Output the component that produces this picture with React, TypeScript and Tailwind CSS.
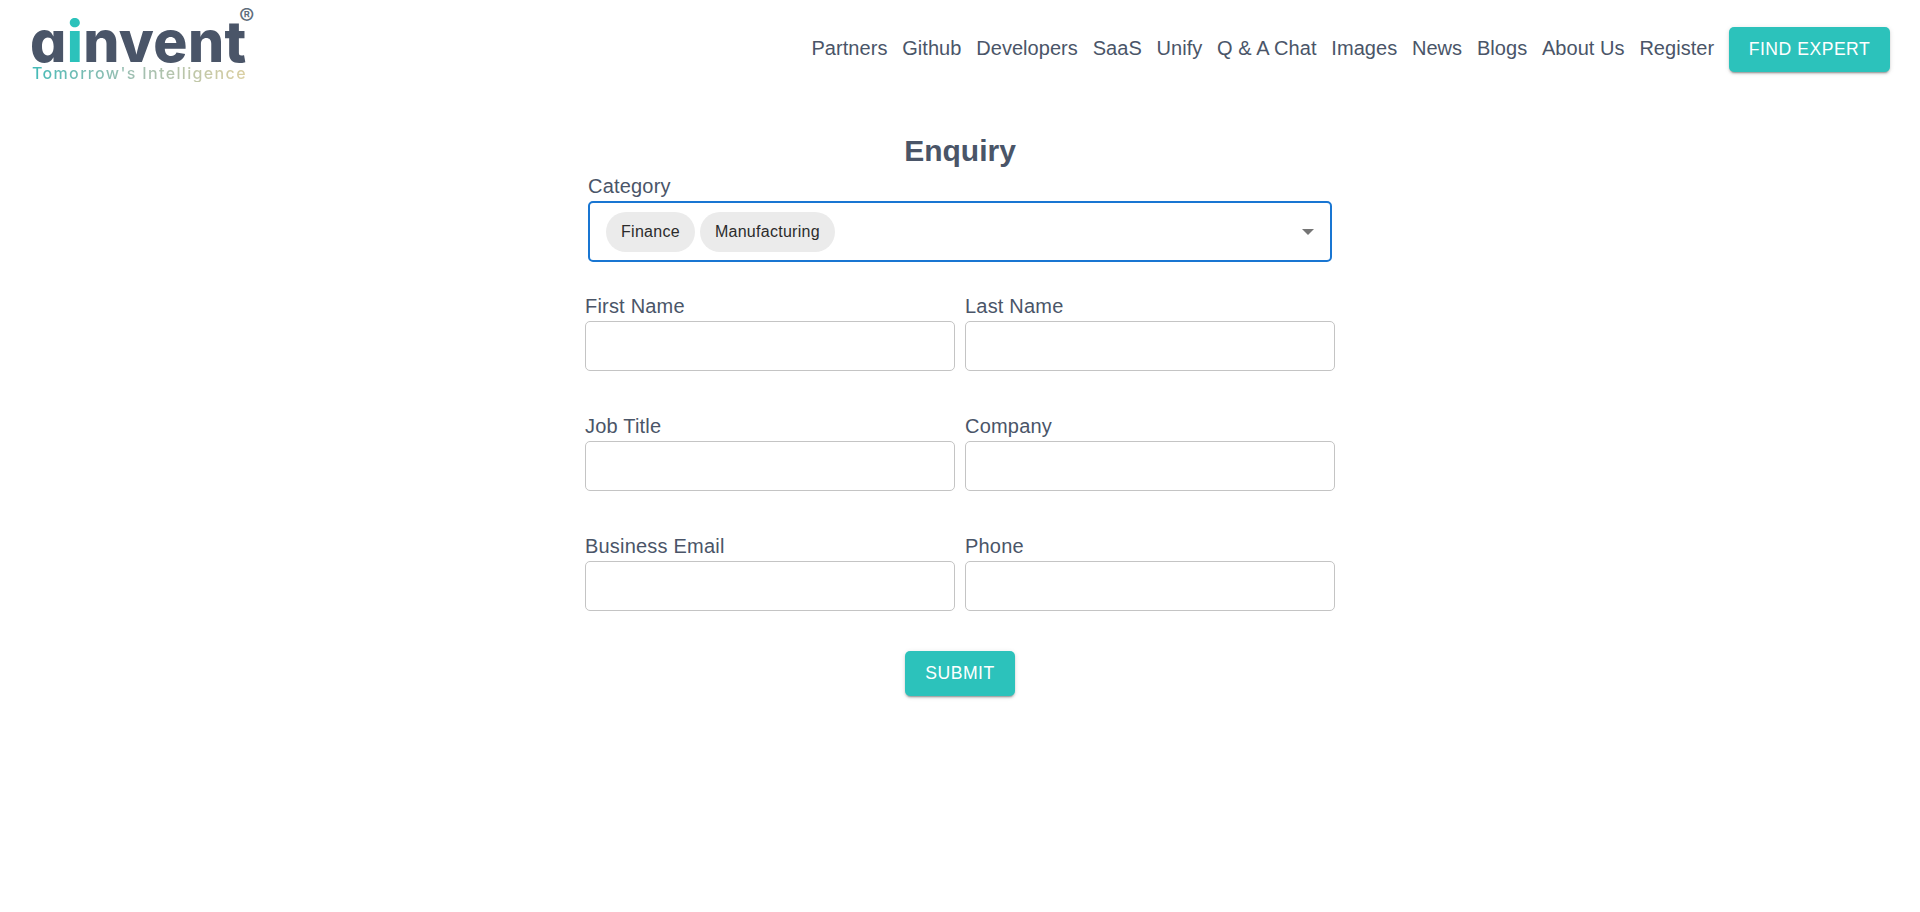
const navLinks = ["Partners", "Github", "Developers", "SaaS", "Unify", "Q & A Chat", "Images", "News", "Blogs", "About Us", "Register"];

const rows = [
    ["First Name", "Last Name"],
    ["Job Title", "Company"],
    ["Business Email", "Phone"],
];

const btnShadow = "shadow-[0_3px_1px_-2px_rgba(0,0,0,0.2),0_2px_2px_0_rgba(0,0,0,0.14),0_1px_5px_0_rgba(0,0,0,0.12)]";

function Logo() {
    return (
        <a href="#" className="relative block w-[226px] h-[68px] ml-[30px] mt-[4px] font-['Inter',sans-serif]">
            <div className="h-[48px] text-[57px] leading-[50px] font-extrabold tracking-[0.4px] text-[#4a5568] [font-feature-settings:'cv11']">
                a<span className="text-[#2cc2bb]">i</span>nvent
            </div>
            <div className="w-[218px] ml-[2px] text-[16px] leading-[17px] font-medium tracking-[1.35px] whitespace-nowrap text-transparent bg-clip-text bg-linear-to-r from-[#3fbab7] via-[#a3bfb0] to-[#dccfa0]">
                Tomorrow's Intelligence
            </div>
            <span className="absolute left-[209px] top-[-10px] text-[23px] leading-[20px] text-[#5f6d7c]">®</span>
        </a>
    );
}

function Field({ label }: { label: string }) {
    return (
        <div className="flex-1">
            <label className="block h-[24px] text-[20px] leading-[24px] tracking-[0.2px] text-[#4a5568] mb-[3px]">{label}</label>
            <input type="text" className="block w-full h-[50px] rounded-[5px] border border-[#c4c4c4] bg-white px-3 outline-none" />
        </div>
    );
}

export default function App() {
    return (
        <div className="min-h-[912px] bg-white font-['Liberation_Sans',Arial,sans-serif]">
            <header className="h-[98px] flex items-center justify-between pr-[30px]">
                <Logo />
                <nav className="flex items-center gap-[14.75px]">
                    {navLinks.map((link) => (
                        <a key={link} href="#" className="pb-[2px] text-[20px] leading-[24px] tracking-[0.05px] text-[#4a5568] whitespace-nowrap">
                            {link}
                        </a>
                    ))}
                    <button className={`w-[161px] h-[45px] rounded-[5px] bg-[#2cc2bb] text-white text-[17.6px] tracking-[0.02857em] ${btnShadow}`}>
                        FIND EXPERT
                    </button>
                </nav>
            </header>

            <main className="w-[750px] mx-auto pt-[35px]">
                <h1 className="h-[41px] text-center text-[30px] leading-[36px] font-bold text-[#4a5568]">Enquiry</h1>

                <div className="px-[3px]">
                    <label className="block h-[24px] text-[20px] leading-[24px] tracking-[0.2px] text-[#4a5568] mb-[3px]">Category</label>
                    <div className="h-[61px] rounded-[5px] border-2 border-[#1976d2] flex items-center justify-between pl-[16px] pr-[16px]">
                        <div className="flex items-center gap-[5px]">
                            <span className="h-[40px] rounded-full bg-[#ebebeb] px-[15px] flex items-center text-[16px] tracking-[0.28px] text-[#2b2b2b]">Finance</span>
                            <span className="h-[40px] rounded-full bg-[#ebebeb] px-[15px] flex items-center text-[16px] tracking-[0.28px] text-[#2b2b2b]">Manufacturing</span>
                        </div>
                        <svg width="12" height="6" viewBox="0 0 12 6" className="text-[#757575]">
                            <path d="M0 0h12L6 6z" fill="currentColor" />
                        </svg>
                    </div>
                </div>

                <div className="mt-[32px] flex flex-col gap-[43px]">
                    {rows.map((row) => (
                        <div key={row[0]} className="flex gap-[10px]">
                            {row.map((label) => (
                                <Field key={label} label={label} />
                            ))}
                        </div>
                    ))}
                </div>

                <div className="mt-[40px] flex justify-center">
                    <button className={`w-[110px] h-[45px] rounded-[5px] bg-[#2cc2bb] text-white text-[17.6px] tracking-[0.02857em] ${btnShadow}`}>
                        SUBMIT
                    </button>
                </div>
            </main>
        </div>
    );
}
